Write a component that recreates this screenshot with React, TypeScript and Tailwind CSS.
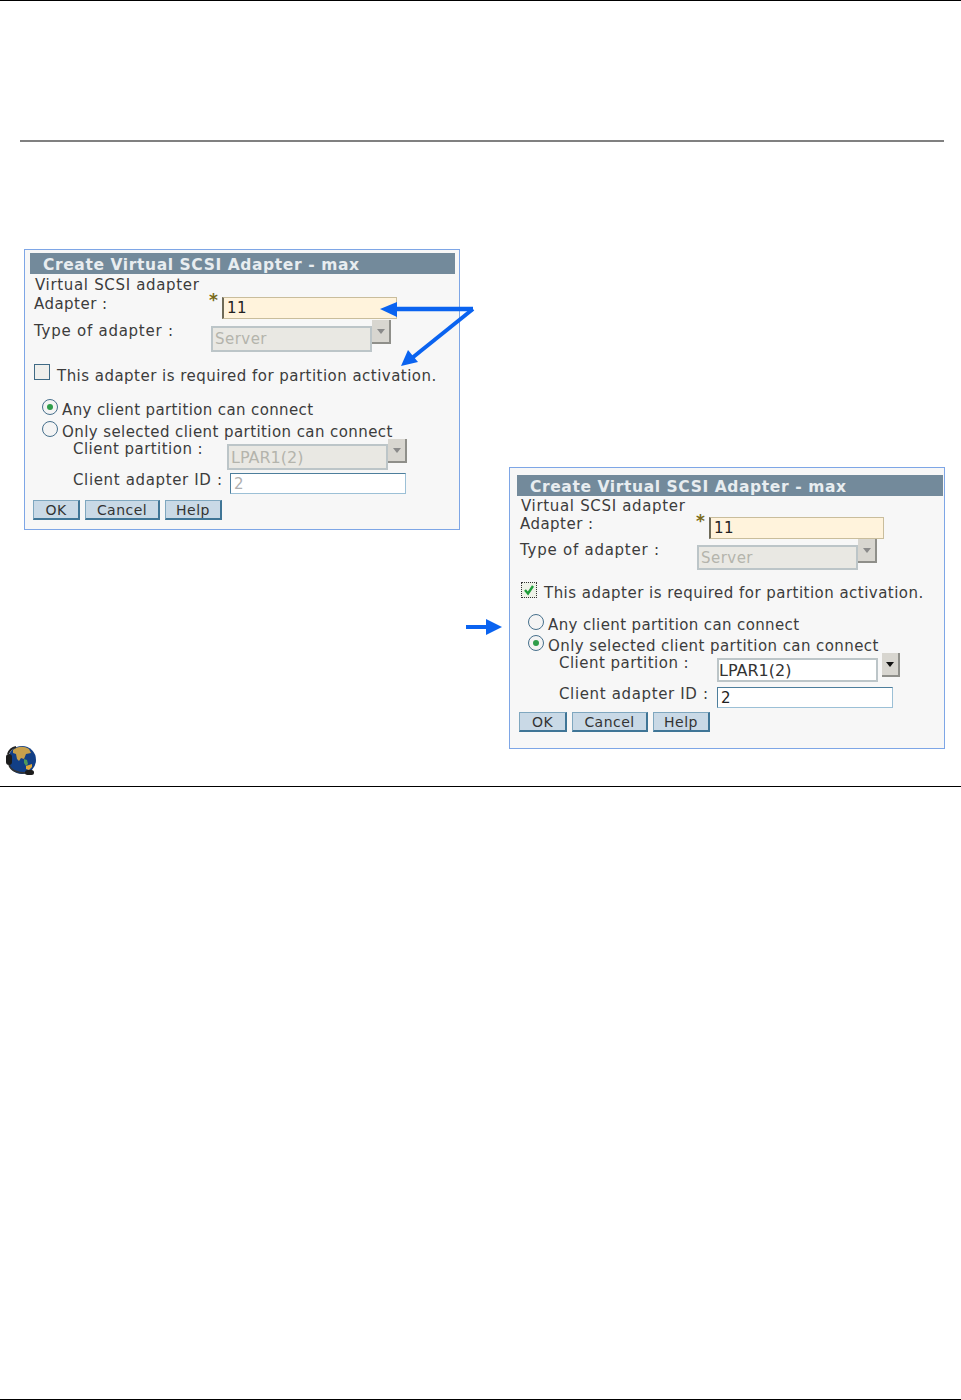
const font = { fontFamily: '"DejaVu Sans", sans-serif' };

function Arrow({ disabled }: { disabled: boolean }) {
  return (
    <svg width="8" height="5" viewBox="0 0 8 5">
      <path d="M0 0h8L4 5z" fill={disabled ? "#8a8a8a" : "#111"} />
    </svg>
  );
}

function Radio({ on }: { on: boolean }) {
  return (
    <span className="-mt-[6px] flex h-[16px] w-[16px] shrink-0 items-center justify-center rounded-full border-[1.5px] border-[#47708c] bg-[#f4f4f4]">
      {on && <span className="h-[6px] w-[6px] rounded-full bg-[#2f9d4a]" />}
    </span>
  );
}

function Checkbox({ on }: { on: boolean }) {
  if (on) {
    return (
      <span className="-mt-[7px] flex h-[16px] w-[16px] shrink-0 items-center justify-center border border-dotted border-[#333] bg-[#eef2e8]">
        <svg width="12" height="12" viewBox="0 0 12 12">
          <path d="M2 6l3 3.5L10 2" fill="none" stroke="#1f9d3a" strokeWidth="2.4" />
        </svg>
      </span>
    );
  }
  return <span className="-mt-[9px] h-[16px] w-[16px] shrink-0 border-[1.5px] border-[#3f6a85] bg-[#efefec]" />;
}

function Select({
  value,
  disabled,
  fieldClass,
  buttonClass,
}: {
  value: string;
  disabled: boolean;
  fieldClass: string;
  buttonClass: string;
}) {
  return (
    <div className="flex items-start">
      <div
        className={`flex w-[161px] items-center border-2 border-[#bcc5c8] px-[2px] ${
          disabled ? "bg-[#e9e8e3] text-[#b4b4ac]" : "bg-white text-[#333]"
        } ${fieldClass}`}
      >
        {value}
      </div>
      <div
        className={`flex h-[24px] items-center justify-center border-r-2 border-b-2 border-[#8f8f8a] bg-[#d8d6d0] ${
          disabled ? "w-[19px]" : "ml-[4px] w-[18px]"
        } ${buttonClass}`}
      >
        <Arrow disabled={disabled} />
      </div>
    </div>
  );
}

function Button({ label, width }: { label: string; width: string }) {
  return (
    <button className={`flex h-[20px] items-center justify-center border border-[#7fa7bf] border-r-2 border-b-2 border-r-[#3f7596] border-b-[#3f7596] bg-[#c9d9e6] text-[14px] text-[#333] ${width}`}>
      {label}
    </button>
  );
}

function Dialog({ second }: { second: boolean }) {
  return (
    <div
      className={`flex w-[436px] shrink-0 flex-col border border-[#7ea6e6] bg-[#f7f7f7] text-[15px] leading-[18px] tracking-[0.47px] text-[#3c3c3c] ${
        second ? "h-[282px] pl-[7px] pr-px pt-[7px]" : "h-[281px] pl-[5px] pr-[4px] pt-[3px]"
      }`}
    >
      <div className="flex h-[21px] shrink-0 items-center bg-[#738a9b] pl-[13px] pt-[2px] text-[15.5px] font-bold tracking-[0.6px] text-[#e8edf0]">
        Create Virtual SCSI Adapter - max
      </div>

      <div className={`tracking-[0.67px] ${second ? "ml-[4px] mt-[1px]" : "ml-[5px] mt-[2px]"}`}>Virtual SCSI adapter</div>

      <div className={`relative flex h-[22px] ${second ? "ml-[3px] mt-0" : "ml-[4px] mt-px"}`}>
        <span>Adapter :</span>
        <span className={`absolute text-[17px] font-bold text-[#7a6a1a] ${second ? "left-[176px] -top-[3px]" : "left-[175px] -top-[4px]"}`}>*</span>
        <div className={`absolute flex h-[22px] w-[175px] items-center border border-l-2 border-[#c9bd9c] border-l-[#6e6a58] bg-[#fff3dc] pl-[3px] text-[#222] ${second ? "left-[189px] top-[2px]" : "left-[188px] top-[2px]"}`}>
          11
        </div>
      </div>

      <div className={`flex h-[32px] ${second ? "ml-[3px] mt-[4px]" : "ml-[4px] mt-[5px]"}`}>
        <span className="w-[177px] tracking-[0.75px]">Type of adapter :</span>
        <Select
          value="Server"
          disabled
          fieldClass={second ? "mt-[4px] h-[25px]" : "mt-[4px] h-[26px]"}
          buttonClass="-mt-[2px]"
        />
      </div>

      <div className={`flex items-center gap-[7px] ${second ? "ml-[4px] mt-[11px]" : "ml-[4px] mt-[13px]"}`}>
        <Checkbox on={second} />
        <span>This adapter is required for partition activation.</span>
      </div>

      <div className={`flex items-center gap-[4px] tracking-[0.38px] ${second ? "ml-[11px] mt-[14px]" : "ml-[12px] mt-[16px]"}`}>
        <Radio on={!second} />
        <span>Any client partition can connect</span>
      </div>
      <div className={`flex items-center gap-[4px] tracking-[0.42px] ${second ? "ml-[11px] mt-[3px]" : "ml-[12px] mt-[4px]"}`}>
        <Radio on={second} />
        <span>Only selected client partition can connect</span>
      </div>

      <div className={`flex h-[30px] ${second ? "ml-[42px] mt-[-1px]" : "ml-[43px] mt-[-1px]"}`}>
        <span className="w-[154px]">Client partition :</span>
        <div className={second ? "ml-[4px] -mt-px" : "-mt-px"}>
          <Select
            value="LPAR1(2)"
            disabled={!second}
            fieldClass={`mt-[5px] pt-px text-[16px] tracking-normal ${second ? "h-[24px] pl-0" : "h-[26px]"}`}
            buttonClass="mt-0"
          />
        </div>
      </div>

      <div className={`flex h-[22px] ${second ? "ml-[42px] mt-[1px]" : "ml-[43px] mt-[1px]"}`}>
        <span className={`tracking-[0.64px] ${second ? "w-[158px]" : "w-[157px]"}`}>Client adapter ID :</span>
        <div
          className={`mt-[2px] flex h-[21px] w-[176px] items-center border border-[#9cc0d6] border-l-[#4d7e9c] border-t-[#4d7e9c] bg-white pl-[3px] ${
            second ? "text-[#222]" : "text-[#b0b0b0]"
          }`}
        >
          2
        </div>
      </div>

      <div className={`flex gap-[5px] ${second ? "ml-[2px] mt-[5px]" : "ml-[3px] mt-[7px]"}`}>
        <Button label="OK" width={second ? "w-[48px]" : "w-[47px]"} />
        <Button label="Cancel" width={second ? "w-[76px]" : "w-[75px]"} />
        <Button label="Help" width="w-[57px]" />
      </div>
    </div>
  );
}

function Globe() {
  return (
    <svg width="34" height="34" viewBox="0 0 34 34">
      <circle cx="17" cy="15" r="14" fill="#123f86" />
      <path d="M8 5c5-4 11-4 16-1l2 4-5 1-2 5-3-1-2 3-2-2-1-5-3-1z" fill="#c7a04c" />
      <path d="M19 14l3 1 1 4-2 2-2-3z" fill="#4f9a5a" />
      <path d="M21 21l6-2 0 3-3 3-3-1z" fill="#e0a93c" />
      <path d="M3 9a11 11 0 0 1 8-7" fill="none" stroke="#222" strokeWidth="2" />
      <rect x="1" y="9" width="6" height="11" rx="3" fill="#1c1c1c" />
      <path d="M4 20c2 6 9 8 17 8" fill="none" stroke="#333" strokeWidth="1.5" />
      <rect x="20" y="25" width="9" height="5" rx="2.5" fill="#1c1c1c" />
    </svg>
  );
}

export default function App() {
  return (
    <div className="flex h-[1400px] flex-col border-t border-black bg-white" style={font}>
      <div className="ml-5 mr-[17px] mt-[139px] border-b-2 border-[#808080]" />

      <div className="relative flex h-[645px] shrink-0 border-b border-black">
        {/* left column */}
        <div className="flex w-[509px] flex-col pl-[24px] pt-[107px]">
          <Dialog second={false} />
          <div className="-ml-[19px] mt-auto mb-[7px]">
            <Globe />
          </div>
        </div>

        {/* right column */}
        <div className="pt-[325px]">
          <Dialog second />
        </div>

        {/* annotation arrows */}
        <svg className="absolute left-0 top-0" width="961" height="645" viewBox="0 142 961 645" fill="none">
          <path d="M473 309H392" stroke="#0a63f0" strokeWidth="4.5" />
          <path d="M380 309l17-7v15z" fill="#0a63f0" />
          <path d="M473 309L412 358" stroke="#0a63f0" strokeWidth="4" />
          <path d="M401 366l7-16 10 12z" fill="#0a63f0" />
          <path d="M466 627H490" stroke="#0a63f0" strokeWidth="4" />
          <path d="M502 627l-16-8v16z" fill="#0a63f0" />
        </svg>
      </div>

      <div className="flex-1" />
      <div className="border-b border-black" />
    </div>
  );
}
